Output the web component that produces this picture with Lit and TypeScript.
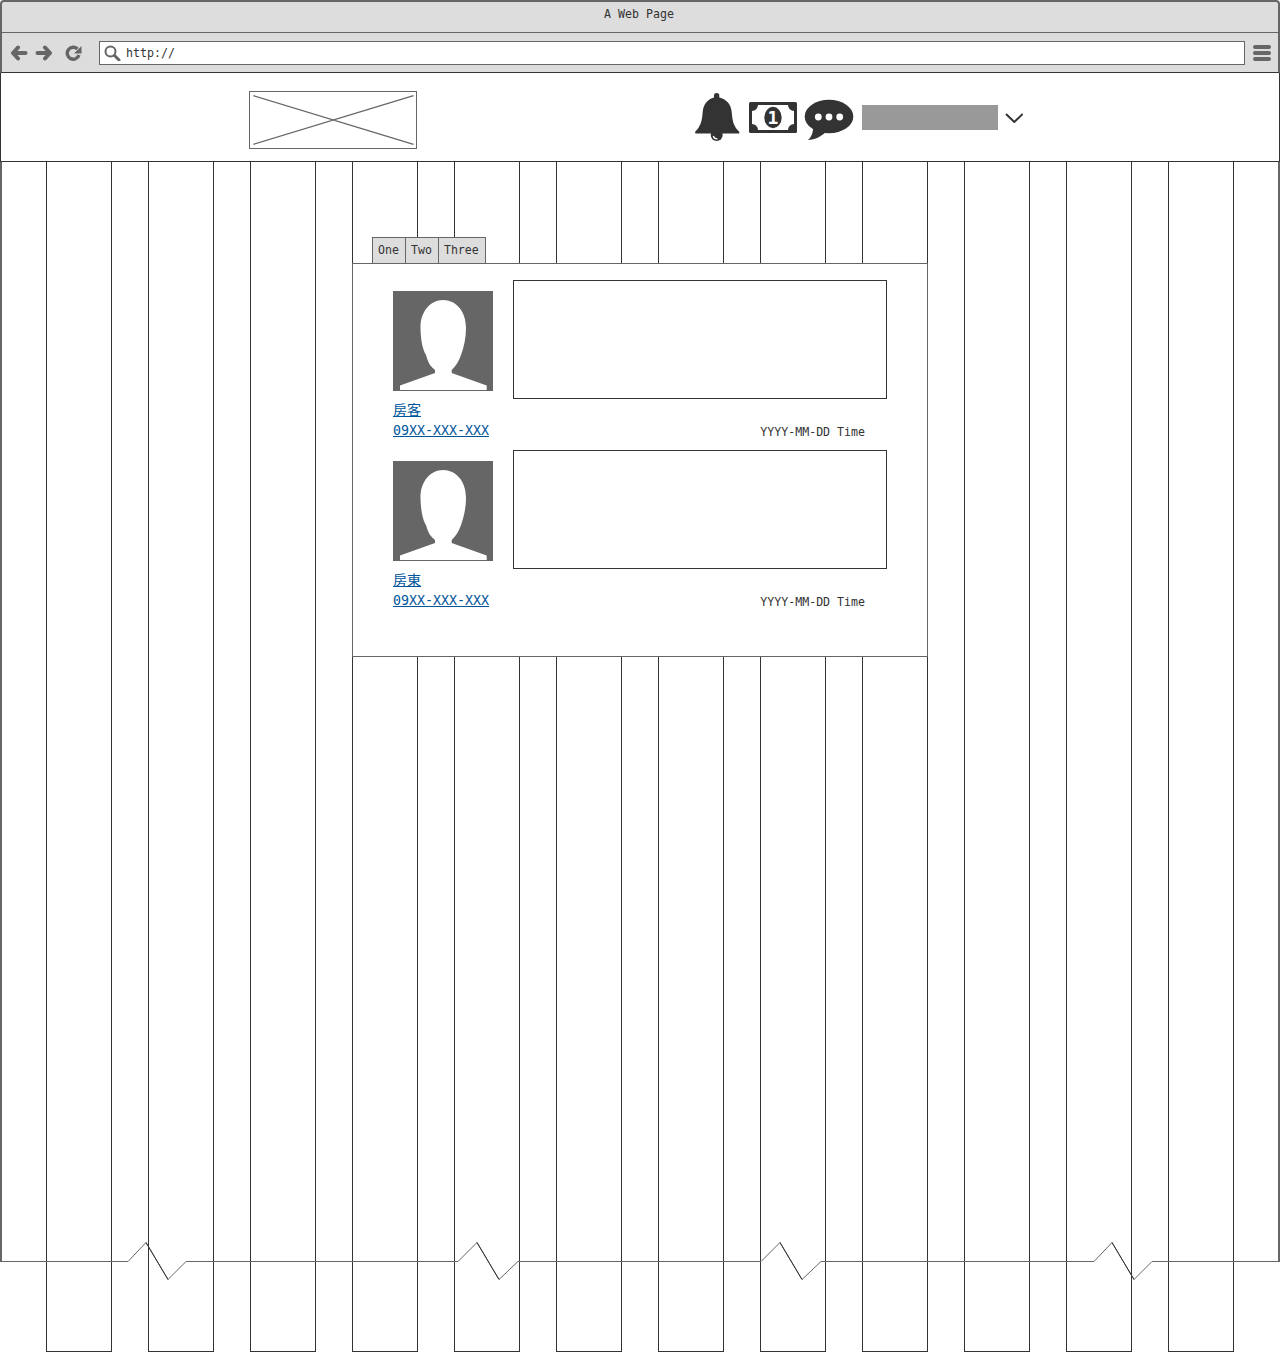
import { LitElement, html, css, svg } from 'lit';
import { customElement } from 'lit/decorators.js';

const COLUMN_COUNT = 12;
const MESSAGES = [{ name: '房客' }, { name: '房東' }];

const TOP_TABS = ['One', 'Two', 'Three'];

// torn page edge, drawn over the columns
const TEAR_POINTS =
  '0,1261.5 128,1261.5 146,1242.5 168,1279.5 186,1261.5 458,1261.5 477,1242.5 499,1279.5 518,1261.5 ' +
  '761,1261.5 780,1242.5 802,1279.5 821,1261.5 1094,1261.5 1112,1242.5 1134,1279.5 1152,1261.5 1279,1261.5';
const TEAR_DROPS = 'M146 1242.5 168 1279.5M477 1242.5 499 1279.5M780 1242.5 802 1279.5M1112 1242.5 1134 1279.5';

const avatar = svg`
  <rect width="100" height="100" fill="#666" />
  <path
    fill="#fff"
    d="M7 99V94.5L42 82V79C38 76 35 72 33 64C29 58 27.5 45 27.5 36C27.5 20 38 9 50 9C63 9 73 20 73 37C73 46 71 56 68 64C66 70 63 75 58.7 79V82L93.7 94.5V99Z"
  />
`;

@customElement('app-root')
export class AppRoot extends LitElement {
  render() {
    return html`
      <div class="columns">
        ${Array.from({ length: COLUMN_COUNT }, () => html`<div class="column"></div>`)}
      </div>

      <div class="title-bar">A Web Page</div>

      <div class="toolbar">
        <svg class="nav" width="18" height="16" viewBox="0 0 18 16">
          <path d="M8 2.5 3 8 8 13.5M4 8H15.5" fill="none" stroke="#666" stroke-width="4" stroke-linecap="round" stroke-linejoin="round" />
        </svg>
        <svg class="nav" width="18" height="16" viewBox="0 0 18 16">
          <path d="M10 2.5 15 8 10 13.5M14 8H2.5" fill="none" stroke="#666" stroke-width="4" stroke-linecap="round" stroke-linejoin="round" />
        </svg>
        <svg class="reload" width="17" height="16" viewBox="0 0 17 16">
          <path d="M12.5 4A6 6 0 1 0 14 10" fill="none" stroke="#666" stroke-width="3.4" />
          <path d="M16.5 1V8.5H9Z" fill="#666" />
        </svg>
        <div class="address">
          <svg width="17" height="16" viewBox="0 0 17 16">
            <circle cx="6.5" cy="6.5" r="5" fill="none" stroke="#666" stroke-width="2" />
            <path d="M10.5 10.5 15 15" stroke="#666" stroke-width="3" stroke-linecap="round" />
          </svg>
          <span>http://</span>
        </div>
        <div class="menu"><i></i><i></i><i></i></div>
      </div>

      <header>
        <svg class="logo" width="168" height="58" viewBox="0 0 166 56">
          <path d="M3.5 3.7 163.5 52.3M3.5 52.3 163.5 3.7" stroke="#666" stroke-width="1.3" fill="none" />
        </svg>
        <svg class="bell" width="46" height="50" viewBox="0 0 46 50">
          <circle cx="22.7" cy="43" r="6" fill="#333" />
          <path fill="none" stroke="#fff" stroke-width="1.2" d="M19.3 44A3.8 3.8 0 0 0 23.5 46.8" />
          <path
            fill="#333"
            d="M22.7 1A2.6 2.6 0 0 1 25.3 3.6V5.5C32 7 37 12 37.7 20C38.5 30 40 35 45.5 40L45 41.5H1.5L1 40C6 35 8 30 8.7 20C9.4 12 14 7 20 5.5V3.6A2.6 2.6 0 0 1 22.7 1Z"
          />
        </svg>
        <svg class="money" width="48" height="31" viewBox="0 0 48 31">
          <rect width="48" height="31" rx="1.5" fill="#333" />
          <path
            fill="#fff"
            d="M9 3H39A6 6 0 0 0 45 9V22A6 6 0 0 0 39 28H9A6 6 0 0 0 3 22V9A6 6 0 0 0 9 3Z"
          />
          <ellipse cx="24" cy="15.5" rx="8.7" ry="10.7" fill="#333" />
          <text x="24" y="22" text-anchor="middle" class="money-digit">1</text>
        </svg>
        <svg class="chat" width="50" height="42" viewBox="0 0 50 42">
          <ellipse cx="25" cy="17.5" rx="24.3" ry="16.7" fill="#333" />
          <path d="M9 27C9.5 33 7.5 38 4 41C11 41 18 37 23 32Z" fill="#333" />
          <circle cx="14.3" cy="18" r="3.4" fill="#fff" />
          <circle cx="25" cy="18" r="3.4" fill="#fff" />
          <circle cx="35.7" cy="18" r="3.4" fill="#fff" />
        </svg>
        <div class="user-bar"></div>
        <svg class="chevron" width="18" height="10" viewBox="0 0 18 10">
          <path d="M1 1 9.3 9 17.7 1" fill="none" stroke="#333" stroke-width="2" />
        </svg>
      </header>

      <main>
        <div class="tabs">
          ${TOP_TABS.map((tab) => html`<div class="tab">${tab}</div>`)}
        </div>
        <section class="panel">
          ${MESSAGES.map(
            (message) => html`
              <div class="row">
                <div class="person">
                  <svg class="avatar" width="100" height="100" viewBox="0 0 100 100">${avatar}</svg>
                  <a class="name">${message.name}</a>
                  <a class="phone">09XX-XXX-XXX</a>
                </div>
                <div>
                  <div class="bubble"></div>
                  <div class="date">YYYY-MM-DD Time</div>
                </div>
              </div>
            `,
          )}
        </section>
      </main>

      <svg class="tear" width="1280" height="1352" viewBox="0 0 1280 1352">
        <polyline points=${TEAR_POINTS} fill="none" stroke="#666" />
        <path d=${TEAR_DROPS} fill="none" stroke="#333" />
      </svg>
    `;
  }

  static styles = css`
    :host {
      display: block;
      position: relative;
      height: 1352px;
      overflow: hidden;
      background: #fff;
      color: #333;
      font-family: 'DejaVu Sans Mono', monospace;
      font-size: 11.6px;
    }

    .columns {
      position: absolute;
      top: 162px;
      bottom: 0;
      left: 46px;
      display: flex;
      gap: 36px;
    }

    .column {
      box-sizing: border-box;
      width: 66px;
      border: 1px solid #333;
      border-top: 0;
    }

    .title-bar {
      box-sizing: border-box;
      height: 33px;
      padding: 5px 2px 0 0;
      border: 2px solid #666;
      border-top-left-radius: 4px;
      border-top-right-radius: 4px;
      border-bottom-width: 1px;
      background: #ddd;
      line-height: 14px;
      text-align: center;
    }

    .toolbar {
      box-sizing: border-box;
      display: flex;
      align-items: center;
      height: 40px;
      padding-left: 8px;
      border-left: 2px solid #666;
      border-right: 2px solid #666;
      border-bottom: 1px solid #333;
      background: #ddd;
    }

    .nav {
      margin-right: 7px;
    }

    .reload {
      margin-left: 5px;
    }

    .address {
      box-sizing: border-box;
      display: flex;
      align-items: center;
      gap: 5px;
      width: 1146px;
      height: 24px;
      margin-left: 17px;
      padding-left: 4px;
      border: 1px solid #666;
      background: #fff;
    }

    .menu {
      display: flex;
      flex-direction: column;
      gap: 2px;
      margin-left: 8px;
    }

    .menu i {
      display: block;
      width: 18px;
      height: 4px;
      border-radius: 2px;
      background: #666;
    }

    header {
      box-sizing: border-box;
      display: flex;
      align-items: flex-start;
      height: 89px;
      border-left: 1px solid #333;
      border-right: 1px solid #333;
      border-bottom: 1px solid #333;
      background: #fff;
    }

    header svg {
      display: block;
    }

    .logo {
      box-sizing: border-box;
      margin: 18px 0 0 248px;
      border: 1px solid #666;
    }

    .bell {
      margin: 19px 0 0 277px;
    }

    .money {
      margin: 29px 0 0 9px;
    }

    .money-digit {
      fill: #fff;
      font-family: 'DejaVu Sans Mono', monospace;
      font-size: 18px;
      font-weight: 700;
    }

    .chat {
      margin: 26px 0 0 7px;
    }

    .user-bar {
      width: 136px;
      height: 25px;
      margin: 32px 0 0 8px;
      background: #999;
    }

    .chevron {
      margin: 40px 0 0 7px;
    }

    main {
      box-sizing: border-box;
      height: 1100px;
      padding-top: 75px;
      border-left: 2px solid #666;
      border-right: 2px solid #666;
    }

    .tabs {
      position: relative;
      z-index: 2;
      display: flex;
      margin: 0 0 -1px 370px;
    }

    .tab {
      box-sizing: border-box;
      height: 27px;
      padding: 0 6px 0 5px;
      border: 1px solid #666;
      background: #ddd;
      line-height: 25px;
    }

    .tab + .tab {
      margin-left: -1px;
    }

    .panel {
      position: relative;
      z-index: 1;
      width: 576px;
      box-sizing: border-box;
      margin-left: 350px;
      padding: 16px 0 36px 40px;
      border: 1px solid #666;
      background: #fff;
    }

    .row {
      display: grid;
      grid-template-columns: 100px 374px;
      gap: 20px;
      height: 170px;
    }

    .person {
      padding-top: 11px;
    }

    .avatar {
      display: block;
      margin-bottom: 10px;
    }

    .name,
    .phone {
      display: block;
      color: #00569c;
      line-height: 20px;
      text-decoration: underline;
      white-space: nowrap;
    }

    .name {
      margin-bottom: 4px;
      font-family: 'Noto Sans CJK TC', sans-serif;
      font-size: 14px;
      line-height: 16px;
    }

    .phone {
      font-size: 13.3px;
    }

    .bubble {
      box-sizing: border-box;
      height: 119px;
      border: 1px solid #333;
    }

    .date {
      margin-top: 25px;
      padding-right: 22px;
      line-height: 16px;
      text-align: right;
    }

    .tear {
      position: absolute;
      top: 0;
      left: 0;
      z-index: 3;
      pointer-events: none;
    }
  `;
}
